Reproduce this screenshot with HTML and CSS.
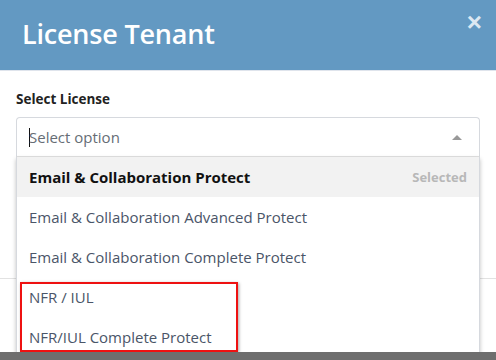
FILE: index.html
```html
<!DOCTYPE html>
<html lang="en">
<head>
    <meta charset="UTF-8">
    <meta name="viewport" content="width=device-width, initial-scale=1.0">
    <title>License Tenant</title>
    <link rel="stylesheet" href="styles.css">
</head>
<body>
    <div class="modal">
        <div class="modal-header">
            <h1>License Tenant</h1>
            <button class="close" type="button">&times;</button>
        </div>
        <div class="modal-body">
            <label class="field-label">Select License</label>
            <div class="select">
                <div class="select-box">
                    <span class="caret"></span>
                    <span class="placeholder">Select option</span>
                    <span class="arrow"></span>
                </div>
                <ul class="options">
                    <li class="option selected">
                        <span>Email &amp; Collaboration Protect</span>
                        <span class="tag">Selected</span>
                    </li>
                    <li class="option">Email &amp; Collaboration Advanced Protect</li>
                    <li class="option">Email &amp; Collaboration Complete Protect</li>
                    <li class="option">NFR / IUL</li>
                    <li class="option">NFR/IUL Complete Protect</li>
                    <li class="highlight"></li>
                </ul>
            </div>
        </div>
        <div class="modal-footer"></div>
    </div>
    <div class="page"></div>
</body>
</html>
```

FILE: styles.css
```css
body {
    margin: 0;
    padding: 0;
    font-family: "Open Sans", "Noto Sans", Arial, sans-serif;
    background: #6e6e6e;
}

.modal {
    background: #fff;
    height: 352px;
    display: flex;
    flex-direction: column;
}

.modal-header {
    background: #6399c2;
    height: 70px;
    border-bottom: 1px solid #dfe4ec;
    display: flex;
    align-items: flex-start;
    justify-content: space-between;
    padding: 0 14px 0 22px;
}

.modal-header h1 {
    margin: 15px 0 0;
    color: #fff;
    font-size: 27px;
    font-weight: 600;
    letter-spacing: -0.2px;
}

.close {
    background: none;
    border: none;
    padding: 0;
    margin-top: 9px;
    color: #dce8f2;
    font-size: 26px;
    font-weight: 700;
    line-height: 26px;
    font-family: Arial, sans-serif;
}

.modal-body {
    padding: 19px 16px 0;
    height: 188px;
    border-bottom: 1px solid #e2e2e2;
}

.field-label {
    display: block;
    font-size: 13.5px;
    font-weight: 700;
    color: #222;
    margin-bottom: 9px;
    line-height: 18px;
}

.select {
    position: relative;
}

.select-box {
    height: 38px;
    border: 1px solid #d6d9de;
    border-bottom-color: #e2e2e2;
    border-radius: 4px 4px 0 0;
    display: flex;
    align-items: center;
    padding: 0 17px 0 12px;
}

.caret {
    width: 1px;
    height: 19px;
    background: #111;
}

.placeholder {
    flex: 1;
    font-size: 15px;
    color: #666d75;
    margin-left: -1px;
}

.arrow {
    width: 0;
    height: 0;
    border-left: 5px solid transparent;
    border-right: 5px solid transparent;
    border-bottom: 5px solid #999;
}

.options {
    position: absolute;
    top: 40px;
    left: 0;
    right: 0;
    margin: 0;
    padding: 0;
    list-style: none;
    background: #fff;
    border: 1px solid #d6d9de;
    border-top: none;
    border-radius: 0 0 6px 6px;
    box-shadow: 0 2px 4px rgba(0, 0, 0, 0.25);
}

.option {
    height: 40px;
    display: flex;
    align-items: center;
    justify-content: space-between;
    padding: 0 12px;
    font-size: 15px;
    color: #4a5568;
}

.option.selected {
    background: #f2f2f2;
    color: #111;
    font-weight: 700;
}

.tag {
    font-size: 13px;
    color: #b8b8b8;
}

.highlight {
    position: absolute;
    left: 3px;
    top: 125px;
    width: 214px;
    height: 66px;
    border: 2px solid #ee1111;
    box-shadow: 1px 1px 3px rgba(0, 0, 0, 0.35);
}
```
